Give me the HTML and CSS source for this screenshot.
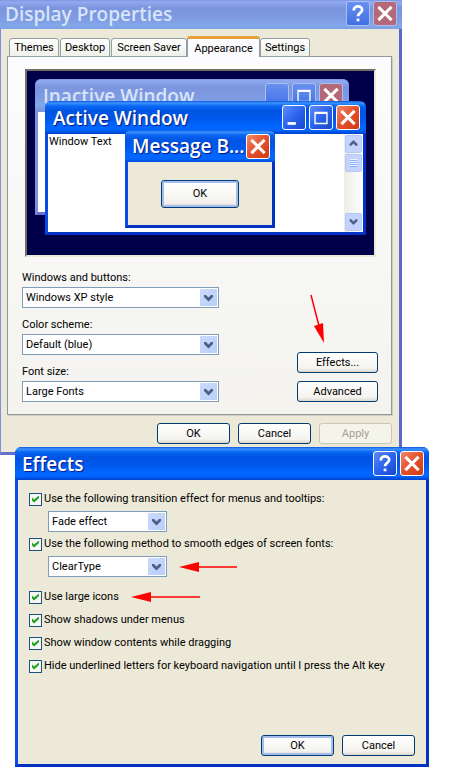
FILE: index.html
```html
<!DOCTYPE html>
<html lang="en">
<head>
<meta charset="utf-8">
<title>Display Properties</title>
<link rel="stylesheet" href="styles.css">
</head>
<body>
<svg class="defs" aria-hidden="true">
  <symbol id="i-close" viewBox="0 0 24 24"><path d="M6 6L18 18M18 6L6 18" stroke="#fff" stroke-width="3.4" stroke-linecap="square" fill="none"/></symbol>
  <symbol id="i-help" viewBox="0 0 24 24"><path d="M7.500 8.600V8C7.500 3 16.500 3 16.500 8C16.500 11.500 12 11 12 15" stroke="#fff" stroke-width="3" fill="none"/><path d="M10.500 17.500h3v3h-3z" fill="#fff"/></symbol>
  <symbol id="i-max" viewBox="0 0 24 24"><path d="M5.500 6.500h13v12h-13zM5 7.500h14" stroke="#fff" stroke-width="1.500" fill="none"/></symbol>
  <symbol id="i-min" viewBox="0 0 24 24"><path d="M5 17h9v3H5z" fill="#fff"/></symbol>
  <symbol id="i-down" viewBox="0 0 17 17"><path d="M4 6h2l2.500 2.500L11 6h2v2l-4.500 4.500L4 8z" fill="#4d6185"/></symbol>
  <symbol id="i-up" viewBox="0 0 17 17"><path d="M4 11h2l2.500-2.500L11 11h2V9L8.500 4.500L4 9z" fill="#4d6185"/></symbol>
  <symbol id="i-arrow" viewBox="0 0 70 10"><path d="M18 5H69" stroke="#f00" stroke-width="1.500" fill="none"/><path d="M0 5L20 0V10z" fill="#f00"/></symbol>
</svg>
<main class="desktop">
  <section class="window window--inactive display" aria-label="Display Properties">
    <header class="titlebar">
      <h1>Display Properties</h1>
      <button class="cap" aria-label="Help"><svg><use href="#i-help"/></svg></button>
      <button class="cap cap--close" aria-label="Close"><svg><use href="#i-close"/></svg></button>
    </header>
    <div class="display-body">
      <div class="tabs" role="tablist">
        <button class="tab" role="tab">Themes</button>
        <button class="tab" role="tab">Desktop</button>
        <button class="tab tab--wide" role="tab">Screen Saver</button>
        <button class="tab tab--active" role="tab" aria-selected="true">Appearance</button>
        <button class="tab" role="tab">Settings</button>
      </div>
      <div class="panel" role="tabpanel">
        <div class="preview">
          <div class="window window--inactive sample-inactive">
            <header class="titlebar">
              <h2>Inactive Window</h2>
              <span class="cap"></span>
              <span class="cap"><svg><use href="#i-max"/></svg></span>
              <span class="cap cap--close"><svg><use href="#i-close"/></svg></span>
            </header>
            <div class="paper"></div>
          </div>
          <div class="window sample-active">
            <header class="titlebar">
              <h2>Active Window</h2>
              <span class="cap"><svg><use href="#i-min"/></svg></span>
              <span class="cap"><svg><use href="#i-max"/></svg></span>
              <span class="cap cap--close"><svg><use href="#i-close"/></svg></span>
            </header>
            <div class="paper">
              <p>Window Text</p>
              <div class="scroll">
                <span class="scroll-box"><svg><use href="#i-up"/></svg></span>
                <span class="scroll-box scroll-thumb"><i></i></span>
                <span class="scroll-box scroll-end"><svg><use href="#i-down"/></svg></span>
              </div>
            </div>
          </div>
          <div class="window sample-message">
            <header class="titlebar">
              <h2>Message B...</h2>
              <span class="cap cap--close"><svg><use href="#i-close"/></svg></span>
            </header>
            <div class="message-body"><button class="btn btn--default btn--large">OK</button></div>
          </div>
        </div>
        <div class="settings">
          <div class="fields">
            <label for="style">Windows and buttons:</label>
            <div class="combo"><select id="style"><option>Windows XP style</option></select><span class="drop"><svg><use href="#i-down"/></svg></span></div>
            <label for="scheme">Color scheme:</label>
            <div class="combo"><select id="scheme"><option>Default (blue)</option></select><span class="drop"><svg><use href="#i-down"/></svg></span></div>
            <label for="size">Font size:</label>
            <div class="combo"><select id="size"><option>Large Fonts</option></select><span class="drop"><svg><use href="#i-down"/></svg></span></div>
          </div>
          <div class="side">
            <svg class="pointer" viewBox="0 0 16 50"><path d="M2 1L10 32" stroke="#f00" stroke-width="1.500"/><path d="M15 49L5 32L14 29z" fill="#f00"/></svg>
            <button class="btn">Effects...</button>
            <button class="btn">Advanced</button>
          </div>
        </div>
      </div>
      <div class="actions">
        <button class="btn">OK</button>
        <button class="btn">Cancel</button>
        <button class="btn" disabled>Apply</button>
      </div>
    </div>
  </section>

  <section class="window effects" aria-label="Effects">
    <header class="titlebar">
      <h1>Effects</h1>
      <button class="cap" aria-label="Help"><svg><use href="#i-help"/></svg></button>
      <button class="cap cap--close" aria-label="Close"><svg><use href="#i-close"/></svg></button>
    </header>
    <div class="effects-body">
      <label class="check"><input type="checkbox" checked>Use the following transition effect for menus and tooltips:</label>
      <div class="method">
        <div class="combo"><select aria-label="Transition effect"><option>Fade effect</option></select><span class="drop"><svg><use href="#i-down"/></svg></span></div>
      </div>
      <label class="check"><input type="checkbox" checked>Use the following method to smooth edges of screen fonts:</label>
      <div class="method">
        <div class="combo"><select aria-label="Smoothing method"><option>ClearType</option></select><span class="drop"><svg><use href="#i-down"/></svg></span></div>
        <svg class="arrow arrow--short" viewBox="0 0 59 10"><path d="M18 5H58" stroke="#f00" stroke-width="1.500"/><path d="M0 5L20 0V10z" fill="#f00"/></svg>
      </div>
      <div class="options">
        <div class="marked">
          <label class="check"><input type="checkbox" checked>Use large icons</label>
          <svg class="arrow"><use href="#i-arrow"/></svg>
        </div>
        <label class="check"><input type="checkbox" checked>Show shadows under menus</label>
        <label class="check"><input type="checkbox" checked>Show window contents while dragging</label>
        <label class="check"><input type="checkbox" checked>Hide underlined letters for keyboard navigation until I press the Alt key</label>
      </div>
      <div class="actions">
        <button class="btn btn--default">OK</button>
        <button class="btn">Cancel</button>
      </div>
    </div>
  </section>
</main>
</body>
</html>
```
FILE: styles.css
```css
* { box-sizing: border-box; }
body {
  margin: 0;
  background: #fff;
  color: #000;
  font: 11px/14px Roboto, "Liberation Sans", sans-serif;
}
h1, h2, p { margin: 0; }
button, select, input { font: inherit; color: inherit; margin: 0; }
svg { display: block; }
.defs { position: absolute; width: 0; height: 0; }

/* Window frames */
.window {
  border: 3px solid #0a4be8;
  border-top: 0;
  border-right-color: #0232c4;
  border-bottom-color: #0232c4;
  border-radius: 7px 7px 0 0;
  background: #0a4be8;
}
.window--inactive {
  border-color: #7b90e0;
  border-right-color: #5a68cc;
  border-bottom-color: #6470cc;
  background: #7b98e0;
}
.titlebar {
  display: flex;
  align-items: center;
  gap: 3px;
  height: 33px;
  margin: 0 -3px;
  padding: 0 5px 0 7px;
  border-radius: 6px 6px 0 0;
  background: linear-gradient(#0a55dc 0, #3d95ff 2px, #0a66f4 5px, #0054e3 10px, #0058ec 18px, #0066ff 25px, #0066ff 29px, #0042cc 33px);
  color: #fff;
  text-shadow: 1px 1px 1px #0a1883;
}
.window--inactive > .titlebar {
  background: linear-gradient(#7f96e2 0, #90aaf0 2px, #7b94de 8px, #7f9ce4 20px, #82a8ea 26px, #7b92dc 33px);
  color: #d8e4f8;
  text-shadow: none;
}
.titlebar h1, .titlebar h2 {
  flex: 1;
  font: 600 19px/26px "Open Sans", "Noto Sans", sans-serif;
  white-space: nowrap;
}
.cap {
  flex: none;
  width: 24px;
  height: 25px;
  padding: 0;
  border: 1px solid #fff;
  border-radius: 3px;
  background: linear-gradient(135deg, #5c8cf8, #2860ec 55%, #1848c8);
}
.cap svg { width: 22px; height: 23px; }
.cap--close { background: linear-gradient(135deg, #f08868, #e4502c 50%, #cc3c14); }
.window--inactive > .titlebar .cap { border-color: #a8c0f4; background: linear-gradient(#6890f0, #4070e4); }
.window--inactive > .titlebar .cap--close { background: #b46878; }

/* Display Properties */
.display { margin-right: 48px; border-left-width: 1px; border-radius: 0; }
.display > .titlebar { height: 29px; margin-left: -1px; padding: 0 5px 2px; border-radius: 0; }
.display-body { padding: 7px 7px 8px 6px; background: #ece9d8; }
.tabs { display: flex; align-items: flex-end; gap: 1px; height: 21px; margin: 0 2px -1px; }
.tab {
  height: 19px;
  width: 50px;
  padding: 0;
  border: 1px solid #91a0a0;
  border-radius: 3px 3px 0 0;
  background: linear-gradient(#fff, #f0f0ea);
  line-height: 18px;
  white-space: nowrap;
}
.tab--wide { width: 76px; }
.tab--active {
  z-index: 1;
  height: 21px;
  width: 73px;
  margin: 0 -1px;
  border-top: 3px solid #e5a03c;
  border-bottom: 0;
  background: #fcfcfe;
  line-height: 15px;
}
.panel {
  padding: 12px 15px 12px 14px;
  border: 1px solid #91989b;
  background: linear-gradient(#fcfcfe, #f4f3ee);
  box-shadow: 1px 1px 0 #d0cdbd;
}
.preview {
  position: relative;
  height: 188px;
  margin-left: 3px;
  border: 2px solid #716f64;
  border-right-color: #ece9d8;
  border-bottom-color: #ece9d8;
  background: #00004a;
}
.preview .window { position: absolute; display: flex; flex-direction: column; }
.preview .titlebar { padding: 0 6px 0 8px; }
.sample-inactive { inset: 8px 25px 40px 8px; }
.preview .sample-active { inset: 30px 8px 20px 18px; }
.preview .sample-message { inset: 59px 99px 27px 98px; border-radius: 5px 5px 0 0; }
.preview .sample-message .titlebar { gap: 0; height: 32px; padding: 0 5px 0 7px; }
.paper { flex: 1; display: flex; justify-content: space-between; background: #fff; }
.paper p { padding: 1px; }
.scroll { display: flex; flex-direction: column; gap: 1px; width: 19px; padding: 1px; background: linear-gradient(90deg, #eeede5, #fff); }
.scroll-box { height: 18px; border: 1px solid #b4c8f6; border-radius: 2px; background: #c3d3fd; }
.scroll-box svg { width: 15px; height: 15px; }
.scroll-thumb { padding: 4px; }
.scroll-thumb i { display: block; height: 8px; background: repeating-linear-gradient(#eef4fe 0 1px, #8cb0f8 1px 2px); }
.scroll-end { margin-top: auto; }
.message-body { flex: 1; display: flex; align-items: center; justify-content: center; background: #ece9d8; }

/* Controls */
.btn {
  width: 73px;
  height: 21px;
  padding: 0;
  border: 1px solid #003c74;
  border-radius: 3px;
  background: linear-gradient(#fff, #f4f3ee 80%, #dcd8cc);
}
.btn--default { box-shadow: inset 0 0 0 2px #a4bcf0; }
.btn--large { width: 78px; height: 28px; }
.btn:disabled { border-color: #c9c7ba; background: #f5f4ea; color: #a1a192; }
.combo { position: relative; }
.combo select {
  display: block;
  width: 100%;
  height: 21px;
  padding: 0 20px 0 3px;
  border: 1px solid #7f9db9;
  border-radius: 0;
  background: #fff;
  appearance: none;
}
.drop { position: absolute; top: 2px; right: 2px; width: 17px; height: 17px; background: linear-gradient(135deg, #cbdafc, #b9cefa); pointer-events: none; }
.drop svg { width: 17px; height: 17px; }
.settings { display: flex; justify-content: space-between; margin-top: 14px; }
.fields { width: 197px; }
.fields label { display: block; margin-bottom: 2px; }
.fields .combo + label { margin-top: 10px; }
.side { display: flex; flex-direction: column; justify-content: flex-end; gap: 8px; margin-right: -2px; }
.side .btn { width: 81px; }
.pointer { width: 16px; height: 50px; margin-left: 12px; }
.actions { display: flex; justify-content: flex-end; gap: 8px; margin-top: 8px; }

/* Effects */
.effects { position: relative; margin: -8px 21px 4px 15px; }
.effects-body { padding: 12px 11px 8px; background: #ece9d8; }
.check { display: flex; align-items: center; gap: 2px; height: 14px; white-space: nowrap; }
.check input { flex: none; width: 13px; height: 13px; border: 1px solid #1c5180; background: #f6f6f2; appearance: none; }
.check input:checked::before {
  content: "";
  display: block;
  width: 7px;
  height: 7px;
  margin: 2px;
  background: #21a121;
  clip-path: polygon(0 28%, 30% 58%, 100% 0, 100% 36%, 30% 100%, 0 70%);
}
.method { display: flex; align-items: center; gap: 12px; margin: 5px 0 5px 19px; }
.method .combo { width: 119px; }
.options { display: flex; flex-direction: column; gap: 9px; margin-top: 13px; }
.marked { display: flex; align-items: center; gap: 12px; }
.arrow { width: 70px; height: 10px; }
.arrow--short { width: 59px; }
.effects .actions { margin-top: 62px; }
```
